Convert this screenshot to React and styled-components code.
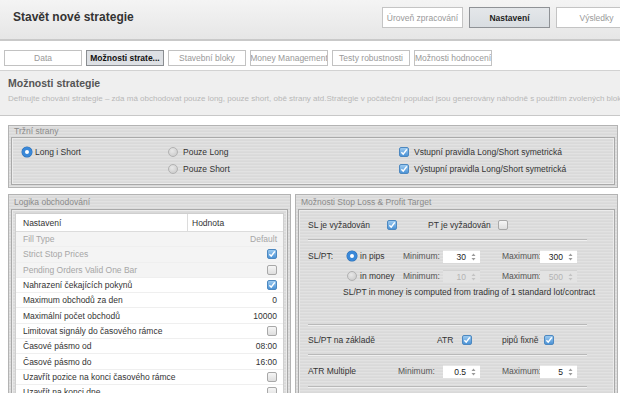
import React from "react";
import styled, { createGlobalStyle, css } from "styled-components";

const GlobalStyle = createGlobalStyle`
  body {
    margin: 0;
    background: #fff;
  }
`;

const Root = styled.div`
  width: 620px;
  height: 393px;
  overflow: hidden;
  background: #fff;
  font-family: "Liberation Sans", Arial, sans-serif;
  font-size: 8.5px;
  color: #333;
`;

/* ---------- header ---------- */

const Header = styled.div`
  height: 41px;
  display: flex;
  align-items: flex-start;
  padding: 7px 0 0 13px;
  box-sizing: border-box;
  background: linear-gradient(#f4f4f4, #e6e6e6);
  border-bottom: 2px solid #c9c9c9;
`;

const Title = styled.div`
  font-size: 12px;
  font-weight: bold;
  line-height: 21px;
  color: #333;
`;

const ButtonGroup = styled.div`
  display: flex;
  gap: 6px;
  margin-left: auto;
  margin-right: -17px;
  flex-shrink: 0;
`;

const HeaderButton = styled.div`
  width: 81px;
  height: 21px;
  box-sizing: border-box;
  display: flex;
  align-items: center;
  justify-content: center;
  background: ${(p) => (p.$active ? "linear-gradient(#e4e7ea, #d9dde1)" : "#fff")};
  border: 1px solid ${(p) => (p.$active ? "#8f9296" : "#c4c4c4")};
  color: ${(p) => (p.$active ? "#222" : "#999")};
  font-weight: ${(p) => (p.$active ? "bold" : "normal")};
`;

/* ---------- tabs ---------- */

const TabBar = styled.div`
  height: 30px;
  box-sizing: border-box;
  display: flex;
  gap: 4px;
  padding: 9px 0 0 4px;
  border-bottom: 1px solid #d2d2d2;
`;

const Tab = styled.div`
  width: 78px;
  height: 16px;
  box-sizing: border-box;
  display: flex;
  align-items: center;
  justify-content: center;
  white-space: nowrap;
  overflow: hidden;
  background: ${(p) => (p.$active ? "#dde0e4" : "#fff")};
  border: 1px solid ${(p) => (p.$active ? "#8a8d91" : "#c2c2c2")};
  color: ${(p) => (p.$active ? "#111" : "#999")};
  font-weight: ${(p) => (p.$active ? "bold" : "normal")};
`;

/* ---------- section intro ---------- */

const Intro = styled.div`
  height: 45px;
  box-sizing: border-box;
  padding: 6px 8px 0;
  background: #efefef;
  border-bottom: 1px solid #c8c8c8;
`;

const IntroTitle = styled.div`
  font-size: 10.5px;
  font-weight: bold;
  color: #555;
  line-height: 13px;
`;

const IntroText = styled.div`
  margin-top: 3px;
  font-size: 8px;
  line-height: 11px;
  color: #b8b8b8;
  white-space: nowrap;
`;

/* ---------- panels ---------- */

const Content = styled.div`
  padding: 9px 2px 0 8px;
  display: flex;
  flex-direction: column;
  gap: 6px;
`;

const brushed = css`
  background-color: #dcdcdc;
  background-image: repeating-linear-gradient(
    0deg,
    rgba(255, 255, 255, 0.18) 0 1px,
    rgba(0, 0, 0, 0.015) 1px 2px,
    transparent 2px 3px
  );
`;

const Panel = styled.div`
  border: 1px solid #b3b3b3;
  padding: 0 2px 2px;
  ${brushed}
`;

const PanelTitle = styled.div`
  height: ${(p) => p.$h || 11}px;
  line-height: ${(p) => p.$h || 11}px;
  padding-left: 3px;
  color: #8a8a8a;
  white-space: nowrap;
`;

const PanelBody = styled.div`
  border: 1px solid #a9a9a9;
  box-shadow: inset 0 0 0 1px #ececec;
  min-height: ${(p) => p.$minH || 0}px;
`;

/* ---------- controls ---------- */

const Check = ({ checked }) => (
  <CheckBox $checked={checked}>
    {checked && (
      <svg width="8" height="8" viewBox="0 0 8 8">
        <path d="M1.4 4.3 L3.2 6.2 L6.8 1.4" fill="none" stroke="#fff" strokeWidth="1.5" />
      </svg>
    )}
  </CheckBox>
);

const CheckBox = styled.span`
  width: 10px;
  height: 10px;
  box-sizing: border-box;
  border-radius: 2px;
  display: inline-flex;
  align-items: center;
  justify-content: center;
  flex-shrink: 0;
  border: 1px solid ${(p) => (p.$checked ? "#4d88c0" : "#a8a8a8")};
  background: ${(p) =>
    p.$checked ? "linear-gradient(#9ccaf0, #4c93d6)" : "linear-gradient(#f6f6f6, #dedede)"};
`;

const Radio = styled.span`
  width: 10px;
  height: 10px;
  box-sizing: border-box;
  border-radius: 50%;
  flex-shrink: 0;
  display: inline-block;
  ${(p) =>
    p.$checked
      ? css`
          border: 3px solid #3a88d8;
          background: #fff;
          box-shadow: 0 0 0 0.5px #2b6fb5;
        `
      : css`
          border: 1px solid #b2b2b2;
          background: radial-gradient(circle at 40% 35%, #e8e8e8, #c6c6c6);
        `}
`;

const Option = styled.label`
  display: flex;
  align-items: center;
  gap: ${(p) => p.$gap || 3}px;
  height: 17px;
  color: #333;
  white-space: nowrap;
`;

const MarketGrid = styled.div`
  display: grid;
  grid-template-columns: 146px 231px 1fr;
  grid-auto-rows: 17px;
  padding: 5px 0 7px 10px;
`;

/* ---------- logic table ---------- */

const TableWrap = styled.div`
  padding: 3px 3px 0;
`;

const Table = styled.div`
  background: #fff;
  border: 1px solid #cfcfcf;
`;

const TableRow = styled.div`
  display: grid;
  grid-template-columns: 1fr 96px;
  height: ${(p) => (p.$head ? "18px" : "15.3px")};
  align-items: center;
  background: ${(p) => (p.$head ? "#fff" : p.$muted ? "#f4f4f4" : "#fff")};
  border-bottom: 1px solid ${(p) => (p.$head ? "#dcdcdc" : "#efefef")};
  box-sizing: border-box;
  color: ${(p) => (p.$muted ? "#a6a6a6" : "#333")};
`;

const NameCell = styled.div`
  padding-left: 7px;
  white-space: nowrap;
  overflow: hidden;
`;

const ValueCell = styled.div`
  height: 100%;
  display: flex;
  align-items: center;
  justify-content: ${(p) => (p.$head ? "flex-start" : "flex-end")};
  padding: ${(p) => (p.$head ? "0 0 0 4px" : "0 6px 0 0")};
  border-left: ${(p) => (p.$head ? "1px solid #dcdcdc" : "none")};
`;

/* ---------- stop loss panel ---------- */

const SlBody = styled.div`
  padding: 8px 0 0 9px;
`;

const Row = styled.div`
  display: flex;
  align-items: center;
  height: 14px;
  margin-top: ${(p) => p.$mt || 0}px;
  white-space: nowrap;
`;

const Slot = styled.div`
  width: ${(p) => p.$w}px;
  flex-shrink: 0;
  display: flex;
  align-items: center;
  gap: 3px;
  color: ${(p) => (p.$dim ? "#555" : "#333")};
`;

const Separator = styled.div`
  width: 279px;
  height: 0;
  border-top: 1px solid #b9b9b9;
  border-bottom: 1px solid #f0f0f0;
  margin-top: ${(p) => p.$mt}px;
`;

const Note = styled.div`
  margin-top: 4px;
  padding-left: 35px;
  line-height: 11px;
  color: #333;
  white-space: nowrap;
`;

const SpinBox = styled.div`
  width: 37px;
  height: 13px;
  box-sizing: border-box;
  display: flex;
  align-items: center;
  justify-content: flex-end;
  gap: 5px;
  padding-right: 4px;
  background: ${(p) => (p.$disabled ? "#e3e3e3" : "#fff")};
  border-top: 1px solid ${(p) => (p.$disabled ? "#d2d2d2" : "#e6e6e6")};
  color: ${(p) => (p.$disabled ? "#b4b4b4" : "#222")};
`;

const Spinner = ({ value, disabled }) => (
  <SpinBox $disabled={disabled}>
    <span>{value}</span>
    <svg width="5" height="8" viewBox="0 0 5 8">
      <path d="M2.5 0.5 L4.5 3 L0.5 3 Z M2.5 7.5 L4.5 5 L0.5 5 Z" fill={disabled ? "#c4c4c4" : "#9a9a9a"} />
    </svg>
  </SpinBox>
);

const BottomRow = styled.div`
  display: grid;
  grid-template-columns: 283px 1fr;
  gap: 4px;
`;

const logicRows = [
  { name: "Fill Type", value: "Default", muted: true },
  { name: "Strict Stop Prices", check: true, muted: true },
  { name: "Pending Orders Valid One Bar", check: false, muted: true },
  { name: "Nahrazení čekajících pokynů", check: true },
  { name: "Maximum obchodů za den", value: "0" },
  { name: "Maximální počet obchodů", value: "10000" },
  { name: "Limitovat signály do časového rámce", check: false },
  { name: "Časové pásmo od", value: "08:00" },
  { name: "Časové pásmo do", value: "16:00" },
  { name: "Uzavřít pozice na konci časového rámce", check: false },
  { name: "Uzavřít na konci dne", check: false },
];

const tabs = [
  "Data",
  "Možnosti strate...",
  "Stavební bloky",
  "Money Management",
  "Testy robustnosti",
  "Možnosti hodnocení",
];

export default function App() {
  return (
    <Root>
      <GlobalStyle />
      <Header>
        <Title>Stavět nové strategie</Title>
        <ButtonGroup>
          <HeaderButton>Úroveň zpracování</HeaderButton>
          <HeaderButton $active>Nastavení</HeaderButton>
          <HeaderButton>Výsledky</HeaderButton>
        </ButtonGroup>
      </Header>

      <TabBar>
        {tabs.map((t, i) => (
          <Tab key={t} $active={i === 1}>
            {t}
          </Tab>
        ))}
      </TabBar>

      <Intro>
        <IntroTitle>Možnosti strategie</IntroTitle>
        <IntroText>
          Definujte chování strategie – zda má obchodovat pouze long, pouze short, obě strany
          atd.Strategie v počáteční populaci jsou generovány náhodně s použitím zvolených bloků
        </IntroText>
      </Intro>

      <Content>
        <Panel>
          <PanelTitle>Tržní strany</PanelTitle>
          <PanelBody>
            <MarketGrid>
              <Option>
                <Radio $checked /> Long i Short
              </Option>
              <Option $gap={5}>
                <Radio /> Pouze Long
              </Option>
              <Option $gap={5}>
                <Check checked /> Vstupní pravidla Long/Short symetrická
              </Option>
              <span />
              <Option $gap={5}>
                <Radio /> Pouze Short
              </Option>
              <Option $gap={5}>
                <Check checked /> Výstupní pravidla Long/Short symetrická
              </Option>
            </MarketGrid>
          </PanelBody>
        </Panel>

        <BottomRow>
          <Panel>
            <PanelTitle $h={14}>Logika obchodování</PanelTitle>
            <PanelBody $minH={220}>
              <TableWrap>
                <Table>
                  <TableRow $head>
                    <NameCell>Nastavení</NameCell>
                    <ValueCell $head>Hodnota</ValueCell>
                  </TableRow>
                  {logicRows.map((r) => (
                    <TableRow key={r.name} $muted={r.muted}>
                      <NameCell>{r.name}</NameCell>
                      <ValueCell>
                        {r.value !== undefined ? r.value : <Check checked={r.check} />}
                      </ValueCell>
                    </TableRow>
                  ))}
                </Table>
              </TableWrap>
            </PanelBody>
          </Panel>

          <Panel>
            <PanelTitle $h={14}>Možnosti Stop Loss &amp; Profit Target</PanelTitle>
            <PanelBody $minH={220}>
              <SlBody>
                <Row>
                  <Slot $w={79}>SL je vyžadován</Slot>
                  <Slot $w={41}>
                    <Check checked />
                  </Slot>
                  <Slot $w={70}>PT je vyžadován</Slot>
                  <Check checked={false} />
                </Row>
                <Separator $mt={7} />

                <Row $mt={8}>
                  <Slot $w={39}>SL/PT:</Slot>
                  <Slot $w={56}>
                    <Radio $checked /> in pips
                  </Slot>
                  <Slot $w={40} $dim>
                    Minimum:
                  </Slot>
                  <Slot $w={59}>
                    <Spinner value="30" />
                  </Slot>
                  <Slot $w={38} $dim>
                    Maximum:
                  </Slot>
                  <Spinner value="300" />
                </Row>
                <Row $mt={6}>
                  <Slot $w={39} />
                  <Slot $w={56}>
                    <Radio /> in money
                  </Slot>
                  <Slot $w={40} $dim>
                    Minimum:
                  </Slot>
                  <Slot $w={59}>
                    <Spinner value="10" disabled />
                  </Slot>
                  <Slot $w={38} $dim>
                    Maximum:
                  </Slot>
                  <Spinner value="500" disabled />
                </Row>
                <Note>SL/PT in money is computed from trading of 1 standard lot/contract</Note>
                <Separator $mt={26} />

                <Row $mt={7}>
                  <Slot $w={129}>SL/PT na základě</Slot>
                  <Slot $w={25}>ATR</Slot>
                  <Slot $w={40}>
                    <Check checked />
                  </Slot>
                  <Slot $w={42}>pipů fixně</Slot>
                  <Check checked />
                </Row>
                <Separator $mt={7} />

                <Row $mt={8}>
                  <Slot $w={90}>ATR Multiple</Slot>
                  <Slot $w={45} $dim>
                    Minimum:
                  </Slot>
                  <Slot $w={59}>
                    <Spinner value="0.5" />
                  </Slot>
                  <Slot $w={38} $dim>
                    Maximum:
                  </Slot>
                  <Spinner value="5" />
                </Row>
                <Separator $mt={8} />
              </SlBody>
            </PanelBody>
          </Panel>
        </BottomRow>
      </Content>
    </Root>
  );
}
